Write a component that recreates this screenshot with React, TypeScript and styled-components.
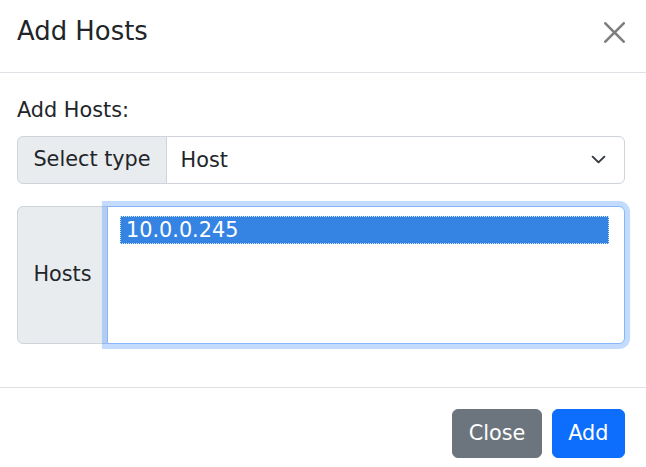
import React from "react";
import styled, { createGlobalStyle } from "styled-components";

const Global = createGlobalStyle`
  html, body { margin: 0; padding: 0; background: #fff; }
  body {
    font-family: "DejaVu Sans", "Liberation Sans", sans-serif;
    font-size: 20.8px;
    line-height: 1.5;
    color: #212529;
  }
  * { box-sizing: border-box; }
`;

const Modal = styled.div`
  width: 646px;
  background: #fff;
  display: flex;
  flex-direction: column;
`;

const Header = styled.div`
  display: flex;
  align-items: center;
  height: 73px;
  padding: 16.6px 21px 24.6px 17px;
  border-bottom: 1px solid #dee2e6;
`;

const Title = styled.h5`
  margin: 0;
  font-size: 25.9px;
  font-weight: 400;
  line-height: 1.2;
`;

const CloseX = styled.button`
  margin-left: auto;
  width: 21px;
  height: 21px;
  padding: 0;
  border: 0;
  background: transparent;
  display: flex;
  align-items: center;
  justify-content: center;
  opacity: 0.5;
  cursor: pointer;
`;

const Body = styled.div`
  padding: 22.2px 21px 21.7px 17px;
`;

const Label = styled.label`
  display: block;
  margin-bottom: 9.4px;
`;

const Group = styled.div`
  display: flex;
  align-items: stretch;
  margin-bottom: 21.7px;
`;

const GroupText = styled.span`
  display: flex;
  align-items: center;
  padding: 7.7px 15.4px;
  background: #e9ecef;
  border: 1px solid #ced4da;
  border-radius: 6px 0 0 6px;
  white-space: nowrap;
`;

const Select = styled.select`
  flex: 1;
  appearance: none;
  margin-left: -1px;
  font: inherit;
  color: #212529;
  height: 48.5px;
  padding: 8.7px 41px 6.7px 13.5px;
  border: 1px solid #ced4da;
  border-radius: 0 6px 6px 0;
  background-color: #fff;
  background-image: url("data:image/svg+xml,%3csvg xmlns='http://www.w3.org/2000/svg' viewBox='0 0 16 16'%3e%3cpath fill='none' stroke='%23343a40' stroke-linecap='round' stroke-linejoin='round' stroke-width='2' d='M2 5l6 6 6-6'/%3e%3c/svg%3e");
  background-repeat: no-repeat;
  background-position: right 15px center;
  background-size: 20.6px 15.4px;
  outline: none;
`;

const Listbox = styled.div`
  flex: 1;
  position: relative;
  z-index: 2;
  margin-left: -1px;
  height: 138px;
  padding: 9px 15.4px 7.7px 12px;
  border: 1px solid #86b7fe;
  border-radius: 0 6px 6px 0;
  background: #fff;
  box-shadow: 0 0 0 5.1px rgba(13, 110, 253, 0.25);
`;

const Option = styled.div<{ $selected?: boolean }>`
  height: 28px;
  line-height: 28px;
  padding: 0 6px;
  color: ${(p) => (p.$selected ? "#fff" : "#212529")};
  background: ${(p) => (p.$selected ? "#3584e4" : "transparent")};
  outline: ${(p) => (p.$selected ? "1px dotted rgba(255,255,255,0.8)" : "none")};
  outline-offset: -1px;
`;

const Footer = styled.div`
  display: flex;
  justify-content: flex-end;
  align-items: center;
  padding: 15.4px 16px 15.4px 15.4px;
  border-top: 1px solid #dee2e6;
`;

const Button = styled.button<{ $variant: "primary" | "secondary" }>`
  margin: 5.1px;
  font: inherit;
  color: #fff;
  height: 49px;
  padding: 7.7px 15.4px;
  border: 1px solid ${(p) => (p.$variant === "primary" ? "#0d6efd" : "#6c757d")};
  background: ${(p) => (p.$variant === "primary" ? "#0d6efd" : "#6c757d")};
  border-radius: 6px;
  cursor: pointer;
`;

export default function App() {
  return (
    <>
      <Global />
      <Modal>
        <Header>
          <Title>Add Hosts</Title>
          <CloseX aria-label="Close">
            <svg width="21" height="21" viewBox="0 0 16 16">
              <path
                fill="#000"
                d="M.293.293a1 1 0 0 1 1.414 0L8 6.586 14.293.293a1 1 0 1 1 1.414 1.414L9.414 8l6.293 6.293a1 1 0 0 1-1.414 1.414L8 9.414l-6.293 6.293a1 1 0 0 1-1.414-1.414L6.586 8 .293 1.707a1 1 0 0 1 0-1.414z"
              />
            </svg>
          </CloseX>
        </Header>
        <Body>
          <Label>Add Hosts:</Label>
          <Group>
            <GroupText>Select type</GroupText>
            <Select defaultValue="host">
              <option value="host">Host</option>
              <option value="group">Group</option>
            </Select>
          </Group>
          <Group>
            <GroupText>Hosts</GroupText>
            <Listbox role="listbox">
              <Option $selected>10.0.0.245</Option>
            </Listbox>
          </Group>
        </Body>
        <Footer>
          <Button $variant="secondary">Close</Button>
          <Button $variant="primary">Add</Button>
        </Footer>
      </Modal>
    </>
  );
}
